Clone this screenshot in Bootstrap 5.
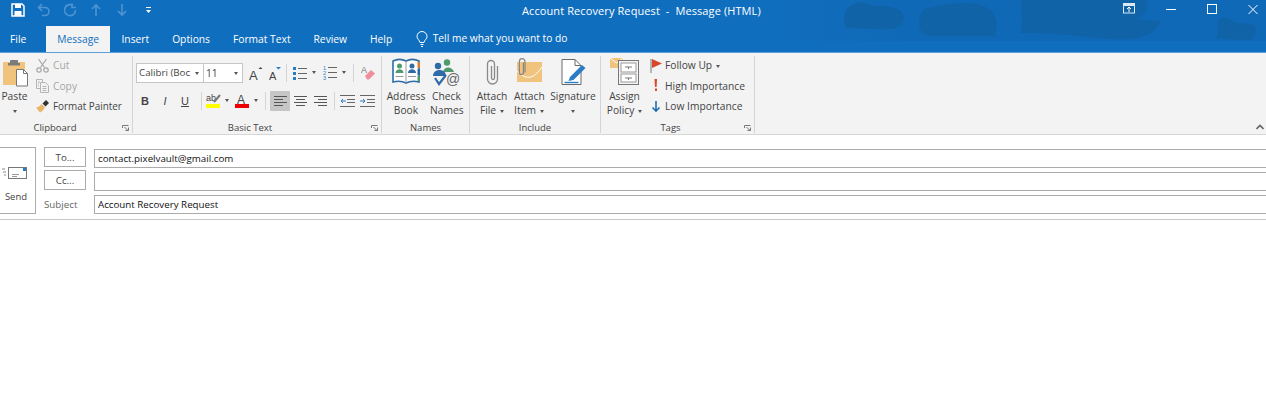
<!DOCTYPE html>
<html lang="en">
<head>
<meta charset="UTF-8">
<title>Account Recovery Request - Message (HTML)</title>
<link href="https://cdn.jsdelivr.net/npm/bootstrap@5.3.0/dist/css/bootstrap.min.css" rel="stylesheet">
<style>
body { font-family: "Open Sans", "Noto Sans", sans-serif; font-size: 10.25px; background: #fff; color: #444; overflow: hidden; }
.app-head { background: #106ebe; color: #fff; height: 53px; position: relative; border-bottom: 1px solid #5a9fd8; }
.clouds { position: absolute; left: 780px; top: 0; }
.title-row { height: 26px; position: relative; }
.qat { padding-left: 5px; height: 20px; }
.qat-i { width: 26px; flex: none; display: flex; justify-content: center; }
.doc-title { position: absolute; left: 522px; top: 3px; font-size: 11px; line-height: 15px; letter-spacing: .1px; }
.win-btns { position: absolute; top: 3px; left: 1123px; }
.tab-row { height: 26px; position: relative; }
.tab-item { padding: 0 11.500px; line-height: 26px; color: #fff; }
.tab-item.tab-file { padding: 0 20px 0 10px; }
.tab-item.tab-on { background: #f3f3f3; color: #106ebe; padding: 0 11px; }
.tell-me { margin-left: 12px; gap: 5px; }

.ribbon { background: #f3f3f3; height: 82px; border-bottom: 1px solid #d6d6d6; position: relative; }
.rb-group { height: 77px; margin-top: 3px; border-right: 1px solid #d4d4d4; flex: none; }
.rb-body { height: 64px; }
.rb-label { height: 13px; line-height: 15px; font-size: 9.500px; color: #444; text-align: center; position: relative; }
.has-launch { padding-right: 14px; }
.launcher { position: absolute; right: 3px; top: 5px; }
.grp-clip { width: 133px; }
.grp-clip .has-launch { padding-right: 22px; }
.grp-text { width: 249px; }
.grp-names { width: 88px; }
.grp-incl { width: 131px; }
.grp-tags { width: 154px; }

.big-btn { text-align: center; line-height: 14px; color: #444; flex: none; padding-top: 2px; }
.big-btn svg { display: block; height: 30px; margin: 0 auto 1px; }
.w-paste { width: 29px; }
.w-addr { width: 48px; }
.w-check { width: 33px; }
.w-file { width: 44px; }
.w-item { width: 30px; }
.w-sig { width: 58px; }
.w-policy { width: 47px; }
.caret-mini { display: inline-block; width: 0; height: 0; border-left: 2.500px solid transparent; border-right: 2.500px solid transparent; border-top: 3px solid #555; vertical-align: middle; margin-left: 4px; }
.caret-solo { margin-left: 0; }
.small-col { margin-top: -1px; margin-left: 7px; }
.tags-col { margin-left: 2px; }
.small-btn { height: 20.500px; line-height: 20.500px; gap: 4px; white-space: nowrap; }
.tags-col .small-btn { gap: 3px; }
.off-text { color: #a6a6a6; }
.painter-text { font-size: 9.900px; }

.text-body-box { padding: 6px 0 0 3px; }
.font-box { height: 20px; background: #fff; border: 1px solid #c6c6c6; line-height: 18px; padding-left: 2px; color: #444; white-space: nowrap; flex: none; }
.font-box .caret-mini { margin: 8px 4px 0 0; }
.fb-name { width: 68px; font-size: 9.750px; }
.fb-size { width: 39px; border-left: 0; }
.tool-row { height: 21px; }
.tool-row2 { margin-top: 7px; }
.vsep { width: 1px; height: 18px; background: #d4d4d4; flex: none; }
.fmt-b { width: 20px; height: 20px; text-align: center; line-height: 20px; color: #444; font-family: "Liberation Sans", sans-serif; font-size: 11px; flex: none; }
.fmt-first { margin-left: -1px; }
.fmt-on { background: #c6c6c6; }
.gl-4 { margin-left: 4px; }
.gl-5 { margin-left: 5px; }
.gl-6 { margin-left: 6px; }
.gl-7 { margin-left: 7px; }

.compose-top { padding-top: 12px; border-bottom: 1px solid #c6c6c6; height: 85px; }
.send-btn { width: 36px; height: 67px; border: 1px solid #ababab; border-left: 0; text-align: center; color: #444; flex: none; padding-right: 3px; }
.send-btn svg { display: block; margin: 19px auto 0 2px; }
.send-lbl { margin-top: 11px; line-height: 14px; font-size: 9.500px; }
.addr-col { width: 42px; margin-left: 8px; flex: none; }
.addr-btn { display: block; height: 20px; width: 42px; padding: 0; font-size: 9.750px; line-height: 20px; border: 1px solid #ababab; border-radius: 0; color: #444; background: #fff; }
.addr-btn + .addr-btn { margin-top: 3px; }
.subject-lbl { font-size: 9.750px; color: #666; line-height: 18px; margin-top: 6px; }
.fields-col { margin-left: 8px; padding-top: 2px; }
.mail-field { height: 19px; padding: 0 3px; font-family: "Open Sans", sans-serif; font-size: 9.750px; line-height: 17px; border: 1px solid #ababab; border-right: 0; border-radius: 0; color: #111; background: #fff; }
.mail-field + .mail-field { margin-top: 4px; }
.mail-field:focus { box-shadow: none; border-color: #ababab; }
.collapse-up { position: absolute; right: 2px; bottom: 4px; }
</style>
</head>
<body>

<div class="app-head">
  <svg class="clouds" width="486" height="41" viewBox="0 0 486 41">
    <defs>
      <linearGradient id="skyFade" x1="0" x2="1" y1="0" y2="0">
        <stop offset="0" stop-color="#106ebe"/>
        <stop offset=".25" stop-color="#1069b6"/>
        <stop offset="1" stop-color="#1069b6"/>
      </linearGradient>
    </defs>
    <rect width="486" height="41" fill="url(#skyFade)"/>
    <g fill="#1163a8">
      <path d="M66 28c-4-8-2-20 8-24 8-4 14 0 18 2 8-1 28 0 31 8 3 9-5 15-14 15-14 1-30-1-43-1z"/>
      <path d="M140 30c-2-10-1-20 8-22 18-3 52-12 66 6 3 6 4 14 1 20l2 3-9-1H150c-4 0-7-3-10-6z"/>
      <path d="M240 33c4-8 1-20 1-33h125c4 6 1 14-10 19l24 2c-3 10-12 16-30 18-30 2-60-7-110-6z"/>
      <path d="M436 38c4-6 0-12 2-18 3-3 12-3 16 2l20 3c3 3 2 9-1 14-12 2-24 0-37-1z"/>
    </g>
  </svg>
  <div class="title-row">
    <div class="qat d-flex align-items-center">
      <div class="qat-i"><svg width="14" height="14" viewBox="0 0 14 14"><path d="M1 1h10l2 2v10H1z" fill="none" stroke="#fff" stroke-width="1.500"/><rect x="4" y="1" width="6" height="4" fill="#fff"/><rect x="3.500" y="8" width="7" height="5" fill="#fff"/></svg></div>
      <div class="qat-i"><svg width="14" height="14" viewBox="0 0 14 14" fill="none" stroke="#4f94d0" stroke-width="1.600"><path d="M5 1 1.500 4.500 5 8M2 4.500h6a4 4 0 0 1 0 8H5"/></svg></div>
      <div class="qat-i"><svg width="14" height="14" viewBox="0 0 14 14" fill="none" stroke="#4f94d0" stroke-width="1.600"><path d="M10 2.500A5.500 5.500 0 1 0 12.500 7M9 .5v4h4"/></svg></div>
      <div class="qat-i"><svg width="12" height="14" viewBox="0 0 12 14" fill="none" stroke="#4f94d0" stroke-width="1.600"><path d="M6 13V2M2 6l4-4 4 4"/></svg></div>
      <div class="qat-i"><svg width="12" height="14" viewBox="0 0 12 14" fill="none" stroke="#4f94d0" stroke-width="1.600"><path d="M6 1v11M2 8l4 4 4-4"/></svg></div>
      <div class="qat-i"><svg width="7" height="9" viewBox="0 0 7 9" fill="#fff"><rect x="1" y="1" width="5" height="1"/><path d="M1 4h5L3.500 7z"/></svg></div>
    </div>
    <div class="doc-title">Account Recovery Request&nbsp; -&nbsp; Message (HTML)</div>
    <div class="win-btns d-flex align-items-center">
      <svg width="43" height="13" viewBox="0 0 43 13"><rect x=".5" y=".5" width="11" height="9.500" fill="none" stroke="#dbe9f6"/><rect x="1" y="1" width="10" height="2" fill="#dbe9f6"/><path d="M6 9V4M4 6l2-2 2 2" stroke="#fff" fill="none"/></svg>
      <svg width="41" height="13" viewBox="0 0 41 13"><path d="M0 6.500h10" stroke="#fff"/></svg>
      <svg width="41" height="13" viewBox="0 0 41 13"><rect x=".5" y="1.500" width="9" height="9" fill="none" stroke="#fff"/></svg>
      <svg width="10" height="11" viewBox="0 0 10 11"><path d="M.5 1 9.500 10M9.500 1 .5 10" stroke="#fff"/></svg>
    </div>
  </div>
  <div class="tab-row d-flex">
    <div class="tab-item tab-file">File</div>
    <div class="tab-item tab-on">Message</div>
    <div class="tab-item">Insert</div>
    <div class="tab-item">Options</div>
    <div class="tab-item">Format Text</div>
    <div class="tab-item">Review</div>
    <div class="tab-item">Help</div>
    <div class="tell-me d-flex align-items-center">
      <svg width="12" height="17" viewBox="0 0 12 17" fill="none" stroke="#fff"><path d="M4 11.500C3.500 9 1 8 1 5.500a5 5 0 0 1 10 0C11 8 8.500 9 8 11.500zM4.500 13.500h3M5 15.500h2"/></svg>
      <span>Tell me what you want to do</span>
    </div>
  </div>
</div>

<div class="ribbon d-flex">
  <!-- clipboard -->
  <div class="rb-group grp-clip">
    <div class="rb-body d-flex">
      <div class="big-btn w-paste">
        <svg width="29" viewBox="0 0 29 30"><path d="M3 4h22v23H3z" fill="#f0c47d"/><path d="M8 5h2V3a1 1 0 0 1 1-1h6a1 1 0 0 1 1 1v2h2v2.500H8z" fill="#7b7b7b"/><path d="M16.500 11.500h7l4 4v12.500h-11z" fill="#fff" stroke="#777"/><path d="M23.500 11.500v4h4" fill="none" stroke="#777"/></svg>
        Paste<br><span class="caret-mini caret-solo"></span>
      </div>
      <div class="small-col">
        <div class="small-btn d-flex align-items-center"><svg width="13" height="15" viewBox="0 0 13 15" fill="none" stroke="#a6a6a6" stroke-width="1.200"><path d="M2.500 1l6 8.500M10.500 1l-6 8.500"/><circle cx="3" cy="12" r="2.200"/><circle cx="10" cy="12" r="2.200"/></svg><span class="off-text">Cut</span></div>
        <div class="small-btn d-flex align-items-center"><svg width="13" height="15" viewBox="0 0 13 15" fill="none" stroke="#b5b5b5"><path d="M.5 1.500h6v9h-6z"/><path d="M4.500 4.500h5l3 3v7h-8z" fill="#f3f3f3"/><path d="M6.500 8.500h4M6.500 10.500h4M6.500 12.500h4M2 4h2M2 6h1M2 8h1"/></svg><span class="off-text">Copy</span></div>
        <div class="small-btn d-flex align-items-center"><svg width="13" height="14" viewBox="0 0 13 14"><path d="M0 8.500c3 0 4-2 5.500-3.500l3.500 3.500C7 11 6 13 4 13.500z" fill="#e8b664"/><path d="M6.500 4.500 10 1l3 3-3.500 3.500z" fill="#333"/></svg><span class="painter-text">Format Painter</span></div>
      </div>
    </div>
    <div class="rb-label has-launch">Clipboard
      <svg class="launcher" width="7" height="6" viewBox="0 0 7 6" fill="none" stroke="#777"><path d="M.5 3V.5H6.500M6.500 2.500v3H3.500M2.500 2l3.500 3.500"/></svg>
    </div>
  </div>
  <!-- basic text -->
  <div class="rb-group grp-text">
    <div class="rb-body text-body-box">
      <div class="tool-row d-flex align-items-center">
        <div class="font-box fb-name d-flex justify-content-between">Calibri (Boc<span class="caret-mini"></span></div>
        <div class="font-box fb-size d-flex justify-content-between">11<span class="caret-mini"></span></div>
        <svg class="gl-6" width="14" height="21" viewBox="0 0 14 21"><text x="0" y="17.500" font-size="13" fill="#444" font-family="Liberation Sans">A</text><path d="M9.500 7l2-2 2 2z" fill="#444"/></svg>
        <svg class="gl-6" width="13" height="21" viewBox="0 0 13 21"><text x="0" y="17.500" font-size="11" fill="#444" font-family="Liberation Sans">A</text><path d="M7 5h5L9.500 7.500z" fill="#2a7cc7"/></svg>
        <span class="vsep gl-4"></span>
        <svg class="gl-6" width="14" height="14" viewBox="0 0 14 14"><g fill="#2a7cc7"><rect x="0" y="1" width="3" height="3"/><rect x="0" y="6" width="3" height="3"/><rect x="0" y="11" width="3" height="3"/></g><path d="M5 2.500h9M5 7.500h9M5 12.500h9" stroke="#666"/></svg>
        <span class="caret-mini gl-5"></span>
        <svg class="gl-7" width="14" height="17" viewBox="0 0 14 17"><g fill="#2a7cc7" font-size="5.500" font-family="Liberation Sans"><text x="0" y="6">1</text><text x="0" y="11">2</text><text x="0" y="16">3</text></g><path d="M5 3.500h9M5 8.500h9M5 13.500h9" stroke="#666"/></svg>
        <span class="caret-mini gl-5"></span>
        <span class="vsep gl-7"></span>
        <svg class="gl-7" width="14" height="15" viewBox="0 0 14 15"><path d="M4 11 10 5l4 3.500-6 6H6z" fill="#ef8f9a"/><text x="0" y="8" font-size="9" fill="#777" font-family="Liberation Sans">A</text></svg>
      </div>
      <div class="tool-row tool-row2 d-flex align-items-center">
        <div class="fmt-b fmt-first fw-bold">B</div>
        <div class="fmt-b fst-italic">I</div>
        <div class="fmt-b text-decoration-underline">U</div>
        <span class="vsep gl-6"></span>
        <svg class="gl-4" width="15" height="17" viewBox="0 0 15 17"><text x="0" y="9" font-size="9" fill="#444" font-family="Liberation Sans">ab</text><path d="M8 10l6-7" stroke="#777" stroke-width="2"/><rect y="12" width="14" height="4" fill="#ffff00"/></svg>
        <span class="caret-mini gl-4"></span>
        <svg class="gl-6" width="15" height="17" viewBox="0 0 15 17"><text x="2" y="11.500" font-size="12" fill="#444" font-family="Liberation Sans">A</text><rect y="12" width="14" height="4" fill="#ee0000"/></svg>
        <span class="caret-mini gl-4"></span>
        <span class="vsep gl-7"></span>
        <div class="fmt-b gl-4 fmt-on d-flex align-items-center justify-content-center"><svg width="13" height="11" viewBox="0 0 13 11" stroke="#555"><path d="M0 1.500h13M0 4.500h9M0 7.500h13M0 10.500h9"/></svg></div>
        <div class="fmt-b d-flex align-items-center justify-content-center"><svg width="13" height="11" viewBox="0 0 13 11" stroke="#555"><path d="M0 1.500h13M2 4.500h9M0 7.500h13M2 10.500h9"/></svg></div>
        <div class="fmt-b d-flex align-items-center justify-content-center"><svg width="13" height="11" viewBox="0 0 13 11" stroke="#555"><path d="M0 1.500h13M4 4.500h9M0 7.500h13M4 10.500h9"/></svg></div>
        <span class="vsep gl-4"></span>
        <svg class="gl-5" width="15" height="12" viewBox="0 0 15 12" fill="none"><path d="M0 .5h15M7 4.500h8M7 7.500h8M0 11.500h15" stroke="#666"/><path d="M6 6H1M3 4 1 6l2 2" stroke="#2a7cc7"/></svg>
        <svg class="gl-5" width="15" height="12" viewBox="0 0 15 12" fill="none"><path d="M0 .5h15M7 4.500h8M7 7.500h8M0 11.500h15" stroke="#666"/><path d="M0 6h5M3 4l2 2-2 2" stroke="#2a7cc7"/></svg>
      </div>
    </div>
    <div class="rb-label has-launch">Basic Text
      <svg class="launcher" width="7" height="6" viewBox="0 0 7 6" fill="none" stroke="#777"><path d="M.5 3V.5H6.500M6.500 2.500v3H3.500M2.500 2l3.500 3.500"/></svg>
    </div>
  </div>
  <!-- names -->
  <div class="rb-group grp-names">
    <div class="rb-body d-flex">
      <div class="big-btn w-addr">
        <svg width="28" viewBox="0 0 28 30"><path d="M1 3c4-2 9-2 13 0 4-2 9-2 13 0v21c-4-1-9-1-13 1-4-2-9-2-13-1z" fill="#fff" stroke="#2e6ca8" stroke-width="1.600"/><path d="M14 3v22" stroke="#999"/><rect x="25.500" y="4" width="2.500" height="6" fill="#e0782f"/><rect x="25.500" y="11" width="2.500" height="6" fill="#2e6ca8"/><rect x="25.500" y="18" width="2.500" height="5" fill="#4d9a6c"/><circle cx="7.500" cy="8" r="2.500" fill="#4d9a6c"/><path d="M3.500 15c0-5 8-5 8 0z" fill="#4d9a6c"/><circle cx="20" cy="8" r="2.500" fill="#2e6ca8"/><path d="M16 15c0-5 8-5 8 0z" fill="#2e6ca8"/><path d="M3.500 18.500h8M16 18.500h8" stroke="#999"/></svg>
        Address<br>Book
      </div>
      <div class="big-btn w-check">
        <svg width="28" viewBox="0 0 28 30"><circle cx="14" cy="4.500" r="3.200" fill="#4d9a6c"/><circle cx="5" cy="8" r="3.200" fill="#2e6ca8"/><path d="M10 14c1-6 9-6 11 0z" fill="#4d9a6c"/><path d="M0 18c0-8 13-8 13 0z" fill="#2e6ca8"/><path d="M2 20l4 6 7-9" fill="none" stroke="#2e6ca8" stroke-width="2.200"/><circle cx="20" cy="21" r="7" fill="#f3f3f3"/><text x="13" y="26" font-size="14" fill="#666" font-family="Liberation Sans">@</text></svg>
        Check<br>Names
      </div>
    </div>
    <div class="rb-label">Names</div>
  </div>
  <!-- include -->
  <div class="rb-group grp-incl">
    <div class="rb-body d-flex">
      <div class="big-btn w-file">
        <svg width="13" viewBox="0 0 13 30" fill="none" stroke="#8a8a8a" stroke-width="1.300"><path d="M11.500 8v13a5 5 0 0 1-10 0V6a3.500 3.500 0 0 1 7 0v14a1.500 1.500 0 0 1-3 0V8"/></svg>
        Attach<br>File<span class="caret-mini"></span>
      </div>
      <div class="big-btn w-item">
        <svg width="26" viewBox="0 0 26 30"><rect x="1" y="4" width="25" height="20" fill="#f0c47d"/><path d="M1 13c9 9 16 9 25-4" fill="none" stroke="#fff"/><path d="M10 14V3a2.800 2.800 0 0 0-5.600 0v11a2 2 0 0 0 4 0V4" fill="none" stroke="#868686" stroke-width="1.200" transform="translate(-1 .5)"/></svg>
        Attach<br>Item<span class="caret-mini"></span>
      </div>
      <div class="big-btn w-sig">
        <svg width="25" viewBox="0 0 25 30"><path d="M1 1.500h13l6 6v19H1z" fill="#fff" stroke="#6a6a6a"/><path d="M14 1.500v6h6" fill="none" stroke="#6a6a6a"/><path d="M9 19 21 7l3.500 3-12 12-5 1z" fill="#2a7cc7"/><path d="M3.500 24.500h14" stroke="#2a7cc7" stroke-width="1.400"/></svg>
        Signature<br><span class="caret-mini caret-solo"></span>
      </div>
    </div>
    <div class="rb-label">Include</div>
  </div>
  <!-- tags -->
  <div class="rb-group grp-tags">
    <div class="rb-body d-flex">
      <div class="big-btn w-policy">
        <svg width="30" viewBox="0 0 30 30"><path d="M0 0h13v10H0z" fill="#f0c47d"/><path d="M0 0l6.500 5L13 0" fill="none" stroke="#fff"/><rect x="8.500" y="2.500" width="20" height="24" fill="#f5f5f5" stroke="#777"/><rect x="11" y="5" width="15" height="9" fill="#fff" stroke="#999"/><rect x="11" y="16" width="15" height="8" fill="#fff" stroke="#999"/><path d="M15 9h7M15 20h7M18.500 9v2M18.500 20v2" stroke="#777"/></svg>
        Assign<br>Policy<span class="caret-mini"></span>
      </div>
      <div class="small-col tags-col">
        <div class="small-btn d-flex align-items-center"><svg width="12" height="15" viewBox="0 0 12 15"><path d="M1 1v14" stroke="#777"/><path d="M2 1l10 4.500L2 10z" fill="#d9472b"/></svg><span>Follow Up<span class="caret-mini"></span></span></div>
        <div class="small-btn d-flex align-items-center"><svg width="12" height="15" viewBox="0 0 12 15"><path d="M4.500 1h2.500l-.4 8H5zM5 10.500h2V13H5z" fill="#d9472b"/></svg><span>High Importance</span></div>
        <div class="small-btn d-flex align-items-center"><svg width="12" height="15" viewBox="0 0 12 15" fill="none" stroke="#1f6fb5" stroke-width="1.600"><path d="M6 2v10M2.500 8.500 6 12l3.500-3.500"/></svg><span>Low Importance</span></div>
      </div>
    </div>
    <div class="rb-label has-launch">Tags
      <svg class="launcher" width="7" height="6" viewBox="0 0 7 6" fill="none" stroke="#777"><path d="M.5 3V.5H6.500M6.500 2.500v3H3.500M2.500 2l3.500 3.500"/></svg>
    </div>
  </div>
  <svg class="collapse-up" width="8" height="6" viewBox="0 0 8 6" fill="none" stroke="#666" stroke-width="1.600"><path d="M.5 5 4 1.500 7.500 5"/></svg>
</div>

<div class="compose-top d-flex">
  <div class="send-btn">
    <svg width="25" height="12" viewBox="0 0 25 12" fill="none"><rect x="6.500" y=".5" width="18" height="11" fill="#fff" stroke="#777"/><path d="M10 7.500h7M10 9.500h5" stroke="#999"/><rect x="21" y="1" width="3" height="3" fill="#2a7cc7"/><path d="M0 2h3M1 5h3M2 8h2" stroke="#888"/></svg>
    <div class="send-lbl">Send</div>
  </div>
  <div class="addr-col">
    <button type="button" class="btn addr-btn">To...</button>
    <button type="button" class="btn addr-btn">Cc...</button>
    <div class="subject-lbl">Subject</div>
  </div>
  <div class="fields-col flex-grow-1">
    <input type="text" class="form-control mail-field" value="contact.pixelvault@gmail.com">
    <input type="text" class="form-control mail-field" value="">
    <input type="text" class="form-control mail-field" value="Account Recovery Request">
  </div>
</div>

<script src="https://cdn.jsdelivr.net/npm/bootstrap@5.3.0/dist/js/bootstrap.bundle.min.js"></script>
</body>
</html>
